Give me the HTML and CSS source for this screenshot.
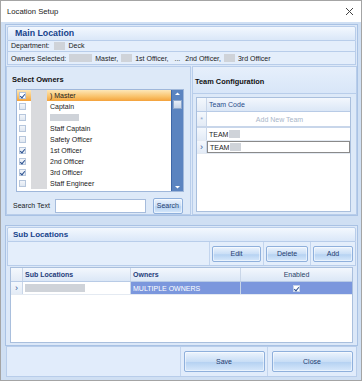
FILE: index.html
```html
<!DOCTYPE html>
<html lang="en">
<head>
    <meta charset="UTF-8">
    <title>Location Setup</title>
    <link rel="stylesheet" href="styles.css">
</head>
<body>
    <div class="window">
        <div class="titlebar">
            <span class="title">Location Setup</span>
            <svg class="close-x" width="9" height="9" viewBox="0 0 9 9"><path d="M1 1L8 8M8 1L1 8" stroke="#444" stroke-width="1"/></svg>
        </div>

        <div class="client">
            <div class="group main-group">
                <div class="group-head">Main Location</div>
                <div class="info-row">
                    <span>Department:</span><span class="redact" style="width: 11px"></span><span>Deck</span>
                </div>
                <div class="info-row">
                    <span>Owners Selected:</span><span class="redact" style="width: 23px"></span><span>Master,</span>
                    <span class="redact" style="width: 11px"></span><span>1st Officer,</span><span class="dots">. . .</span>
                    <span>2nd Officer,</span><span class="redact" style="width: 11px"></span><span>3rd Officer</span>
                </div>

                <div class="split">
                    <div class="panel owners-panel">
                        <div class="panel-title">Select Owners</div>
                        <div class="listbox">
                            <div class="list-rows">
                                <div class="list-row selected"><span class="check on"></span><span class="code"></span><span>) Master</span></div>
                                <div class="list-row"><span class="check"></span><span class="code"></span><span>Captain</span></div>
                                <div class="list-row"><span class="check"></span><span class="code"></span><span class="redact" style="width: 29px"></span></div>
                                <div class="list-row"><span class="check"></span><span class="code"></span><span>Staff Captain</span></div>
                                <div class="list-row"><span class="check"></span><span class="code"></span><span>Safety Officer</span></div>
                                <div class="list-row"><span class="check on"></span><span class="code"></span><span>1st Officer</span></div>
                                <div class="list-row"><span class="check on"></span><span class="code"></span><span>2nd Officer</span></div>
                                <div class="list-row"><span class="check on"></span><span class="code"></span><span>3rd Officer</span></div>
                                <div class="list-row"><span class="check"></span><span class="code"></span><span>Staff Engineer</span></div>
                            </div>
                            <div class="scrollbar">
                                <svg width="11" height="8" viewBox="0 0 11 8"><path d="M3 5L5.5 2.5L8 5Z" fill="#fff"/></svg>
                                <div class="thumb"></div>
                                <div class="track"></div>
                                <svg width="11" height="8" viewBox="0 0 11 8"><path d="M3 3L5.5 5.5L8 3Z" fill="#fff"/></svg>
                            </div>
                        </div>
                        <div class="search-row">
                            <span class="search-label">Search Text</span>
                            <div class="search-input"></div>
                            <button class="btn search-btn">Search</button>
                        </div>
                    </div>

                    <div class="panel team-panel">
                        <div class="panel-title team-title">Team Configuration</div>
                        <div class="team-grid">
                            <div class="grid-row head-row"><span class="ind"></span><span class="cell">Team Code</span></div>
                            <div class="grid-row new-row"><span class="ind">*</span><span class="cell">Add New Team</span></div>
                            <div class="grid-row"><span class="ind"></span><span class="cell">TEAM<span class="redact" style="width: 11px"></span></span></div>
                            <div class="grid-row"><span class="ind">&rsaquo;</span><span class="cell focused">TEAM<span class="redact" style="width: 11px"></span></span></div>
                        </div>
                    </div>
                </div>
            </div>

            <div class="group sub-group">
                <div class="group-head sub-head">Sub Locations</div>
                <div class="toolbar">
                    <div class="tool-cell"><button class="btn edit-btn">Edit</button></div>
                    <div class="tool-cell"><button class="btn delete-btn">Delete</button></div>
                    <div class="tool-cell"><button class="btn add-btn">Add</button></div>
                </div>
                <div class="sub-grid">
                    <div class="sub-row sub-head-row">
                        <span class="ind"></span>
                        <span class="col-name bold">Sub Locations</span>
                        <span class="col-owner bold">Owners</span>
                        <span class="col-enabled">Enabled</span>
                    </div>
                    <div class="sub-row data-row">
                        <span class="ind">&rsaquo;</span>
                        <span class="col-name"><span class="redact" style="width: 60px"></span></span>
                        <span class="col-owner sel">MULTIPLE OWNERS</span>
                        <span class="col-enabled sel"><span class="check on white"></span></span>
                    </div>
                </div>
            </div>

            <div class="footer">
                <div class="foot-space"></div>
                <div class="foot-cell"><button class="btn">Save</button></div>
                <div class="foot-cell"><button class="btn">Close</button></div>
            </div>
        </div>
    </div>
</body>
</html>
```

FILE: styles.css
```css
* {
    margin: 0;
    padding: 0;
    box-sizing: border-box;
}

body {
    background: #fff;
    font-family: "Liberation Sans", Arial, sans-serif;
    font-size: 7px;
    color: #1b1b1b;
}

.window {
    width: 362px;
    height: 381px;
    border: 1px solid #a4a4a4;
    display: flex;
    flex-direction: column;
}

.titlebar {
    height: 21px;
    background: #fff;
    display: flex;
    align-items: center;
    justify-content: space-between;
    padding: 0 7px 0 6px;
}

.title {
    font-size: 7.7px;
    color: #222;
}

.client {
    flex: 1;
    background: #cfdff3;
    padding: 2px 3px 3px 4px;
    display: flex;
    flex-direction: column;
}

.group {
    border: 1px solid #a9c2e4;
    background: #dce8f8;
}

.main-group {
    height: 192px;
    display: flex;
    flex-direction: column;
}

.group-head {
    height: 15px;
    padding-left: 7px;
    display: flex;
    align-items: center;
    font-size: 8.8px;
    font-weight: bold;
    color: #15428b;
    background: linear-gradient(#f3f8fe, #dae7f8);
    border: 1px solid #b8cdea;
    margin: 1px 1px 0;
    border-radius: 2px 2px 0 0;
}

.info-row {
    height: 12px;
    margin: 0 1px;
    padding-left: 3px;
    display: flex;
    align-items: center;
    gap: 2px;
    background: #e4eefb;
    border: 1px solid #b8cdea;
    border-top: none;
    white-space: nowrap;
}

.info-row + .info-row {
    height: 13px;
    gap: 1px;
}

.info-row span {
    margin-right: 2px;
}

.redact {
    display: inline-block;
    height: 8px;
    background: #cfd3d9;
    vertical-align: middle;
}

.dots {
    letter-spacing: -1px;
    padding: 0 3px;
}

.split {
    flex: 1;
    display: flex;
    margin-top: 1px;
}

.panel {
    border: 1px solid #b8cdea;
    background: #dde9f8;
    display: flex;
    flex-direction: column;
}

.owners-panel {
    width: 185px;
    padding: 6px 6px 0 9px;
}

.team-panel {
    flex: 1;
    margin-left: 1px;
}

.panel-title {
    font-size: 7.5px;
    font-weight: bold;
    color: #111;
    height: 14px;
    line-height: 14px;
    margin-left: -4px;
}

.team-title {
    height: 27px;
    line-height: 30px;
    padding-left: 2px;
    margin: 0;
    font-size: 7.4px;
    border-bottom: 1px solid #b8cdea;
    background: linear-gradient(#e6effb, #d8e6f8);
}

.listbox {
    height: 103px;
    margin-top: 2px;
    border: 1px solid #9fb7da;
    background: #fff;
    display: flex;
    overflow: hidden;
}

.list-rows {
    flex: 1;
}

.list-row {
    height: 11px;
    display: flex;
    align-items: center;
    white-space: nowrap;
}

.list-row.selected {
    background: linear-gradient(#fde7b8, #f9c26a 60%, #f4a23b);
}

.list-row .redact {
    height: 7px;
}

.check {
    width: 7px;
    height: 7px;
    margin: 0 5px 0 2px;
    border: 1px solid #b6c6dc;
    background: linear-gradient(#f2f5fa, #dfe7f1);
    position: relative;
    flex: none;
}

.check.on::after {
    content: "";
    position: absolute;
    left: 1px;
    top: 0;
    width: 2px;
    height: 4px;
    border: solid #2a4f8f;
    border-width: 0 1px 1px 0;
    transform: rotate(40deg);
}

.selected .check {
    background: #fff;
}

.code {
    width: 16px;
    height: 11px;
    background: #d9dadd;
    margin-right: 3px;
    flex: none;
}

.scrollbar {
    width: 12px;
    background: #5b84c0;
    border-left: 1px solid #3f68a8;
    display: flex;
    flex-direction: column;
    align-items: center;
}

.thumb {
    width: 9px;
    height: 9px;
    margin-top: 2px;
    background: linear-gradient(#e6edf7, #c5d3e8);
    border: 1px solid #8ea7cc;
}

.track {
    flex: 1;
}

.search-row {
    height: 17px;
    margin-top: 5px;
    margin-left: -3px;
    display: flex;
    align-items: center;
}

.search-label {
    white-space: nowrap;
    flex: none;
}

.search-input {
    width: 91px;
    height: 14px;
    margin-left: 5px;
    flex: none;
    background: #fff;
    border: 1px solid #a6bcdc;
}

.btn {
    font-family: "Liberation Sans", Arial, sans-serif;
    font-size: 7px;
    color: #1f3c70;
    border: 1px solid #8fb0dc;
    border-radius: 2px;
    background: linear-gradient(#edf4fd, #c9def6 50%, #b6d2f2 55%, #d7e8fb);
    box-shadow: inset 0 0 0 1px rgba(255, 255, 255, 0.5);
}

.search-btn {
    width: 30px;
    height: 16px;
    margin-left: 7px;
    flex: none;
}

.team-grid {
    margin: 3px 5px 2px 3px;
    flex: 1;
    background: #fff;
    border: 1px solid #a9bfdd;
}

.grid-row {
    height: 13px;
    display: flex;
    border-bottom: 1px solid #e4eaf2;
}

.grid-row .ind {
    width: 10px;
    flex: none;
    border-right: 1px solid #c9d6e8;
    background: linear-gradient(#f4f8fd, #e3ebf6);
    color: #2f5597;
    font-size: 9px;
    line-height: 12px;
    text-align: center;
}

.grid-row .cell {
    flex: 1;
    padding-left: 2px;
    display: flex;
    align-items: center;
    gap: 1px;
}

.head-row {
    height: 14px;
    background: linear-gradient(#f3f7fd, #dbe7f6);
    border-bottom: 1px solid #b8cbe6;
}

.head-row .cell {
    color: #2a4d8b;
}

.new-row {
    height: 16px;
    border-bottom: 2px solid #c8d6ea;
}

.new-row .ind {
    color: #8fa8cc;
    line-height: 16px;
    font-size: 7px;
}

.new-row .cell {
    justify-content: center;
    color: #a9b6c9;
}

.grid-row .focused {
    border: 1px solid #8a8a8a;
}

.sub-group {
    margin-top: 9px;
    height: 121px;
    display: flex;
    flex-direction: column;
}

.sub-head {
    font-size: 8px;
    padding-left: 5px;
}

.toolbar {
    height: 24px;
    margin: 0 1px;
    display: flex;
    justify-content: flex-end;
    border: 1px solid #b8cdea;
    border-top: none;
    background: #e4eefb;
}

.tool-cell {
    display: flex;
    align-items: center;
    padding: 0 2px;
    border-left: 1px solid #c3d5ee;
}

.edit-btn {
    width: 49px;
    height: 16px;
}

.delete-btn {
    width: 42px;
    height: 16px;
}

.add-btn {
    width: 40px;
    height: 16px;
}

.sub-grid {
    margin: 1px 4px 2px 4px;
    flex: 1;
    background: #fff;
    border: 1px solid #a9bfdd;
}

.sub-row {
    display: flex;
    height: 14px;
}

.sub-row > span {
    display: flex;
    align-items: center;
    padding-left: 2px;
}

.sub-row .ind {
    width: 12px;
    padding: 0;
    justify-content: center;
    color: #2f5597;
    font-size: 9px;
    background: linear-gradient(#f4f8fd, #e3ebf6);
    border-right: 1px solid #c9d6e8;
}

.col-name {
    width: 108px;
    border-right: 1px solid #c9d6e8;
}

.col-owner {
    width: 110px;
    border-right: 1px solid #c9d6e8;
}

.col-enabled {
    flex: 1;
    justify-content: center;
    padding-left: 0 !important;
}

.bold {
    font-weight: bold;
    color: #1f3d7a;
}

.sub-head-row {
    background: linear-gradient(#f3f7fd, #dbe7f6);
    border-bottom: 1px solid #b8cbe6;
}

.sub-head-row .col-enabled {
    color: #2a3f66;
}

.data-row {
    height: 13px;
    border-bottom: 1px solid #e4eaf2;
}

.sel {
    background: #7b97dd;
    color: #fff;
}

.check.white {
    background: #fff;
    border-color: #c6d2e6;
    margin: 0;
}

.footer {
    height: 31px;
    display: flex;
    border: 1px solid #b8cdea;
    background: #e1ecfb;
    margin-left: 1px;
    margin-right: 1px;
}

.foot-space {
    flex: 1;
}

.foot-cell {
    width: 87px;
    display: flex;
    align-items: center;
    justify-content: center;
    border-left: 1px solid #c3d5ee;
}

.foot-cell + .foot-cell {
    width: 89px;
}

.foot-cell .btn {
    width: 81px;
    height: 21px;
}
```
